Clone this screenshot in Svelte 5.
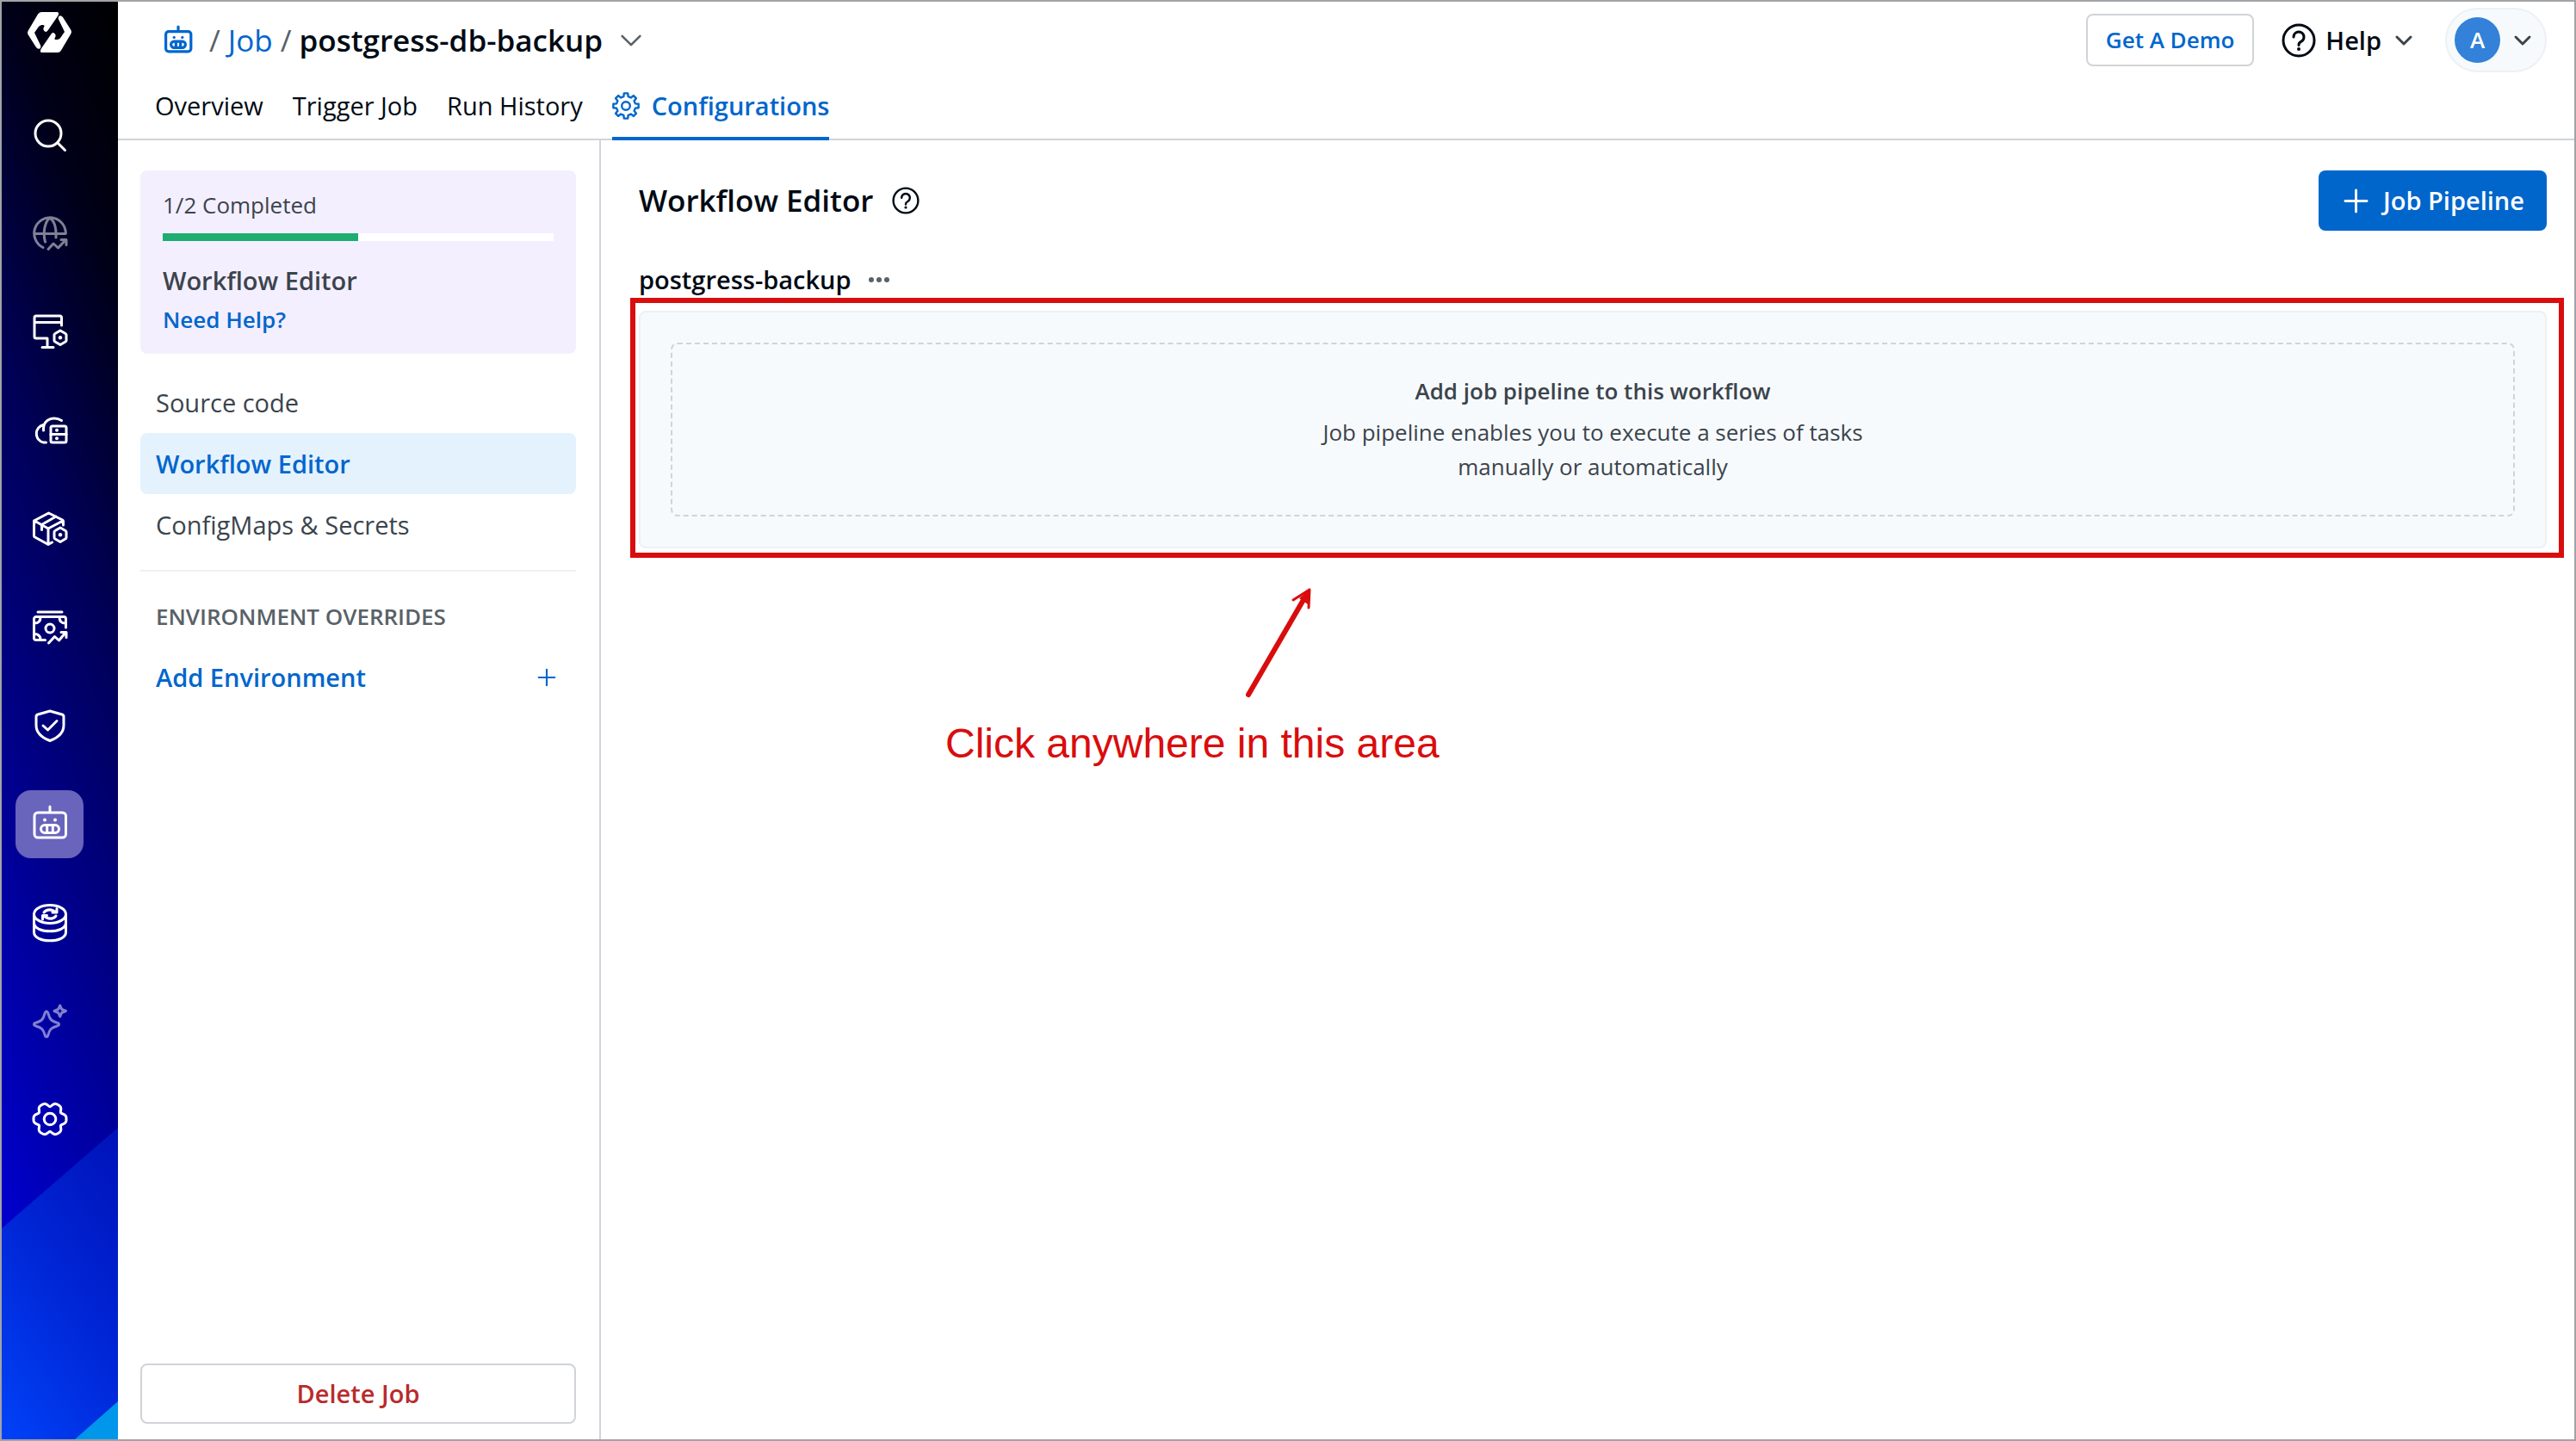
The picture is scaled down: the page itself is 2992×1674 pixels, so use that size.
<script lang="ts">
  let workflowName = "postgress-backup";
  let completed = 1;
  let total = 2;

  const railItems = [
    { id: "search", label: "Search" },
    { id: "globe", label: "Application insights", faded: true },
    { id: "monitor", label: "Application management" },
    { id: "cloud", label: "Infrastructure management" },
    { id: "box", label: "Software release management" },
    { id: "cost", label: "Cost visibility" },
    { id: "shield", label: "Security center" },
    { id: "robot", label: "Automation", active: true },
    { id: "database", label: "Backup management" },
    { id: "sparkle", label: "AI recommendations", faded: true },
    { id: "settings", label: "Global configuration" },
  ];

  const tabs = ["Overview", "Trigger Job", "Run History"];

  const configLinks = [
    { text: "Source code" },
    { text: "Workflow Editor", active: true },
    { text: "ConfigMaps & Secrets" },
  ];

  // closed outline with broad rounded lobes and narrow dips between them
  function wavy(lobes: number, base: number, swing: number) {
    const points = [];
    for (let i = 0; i < 180; i++) {
      const a = (i / 180) * Math.PI * 2;
      const r = base + swing * Math.cos(lobes * a) - 0.6 * Math.cos(2 * lobes * a);
      points.push(`${(20 + r * Math.cos(a)).toFixed(2)} ${(20 + r * Math.sin(a)).toFixed(2)}`);
    }
    return `M${points.join("L")}Z`;
  }

  // gear with straight-sided teeth
  function gear(teeth: number, outer: number, inner: number) {
    const points = [];
    const step = (Math.PI * 2) / teeth;
    for (let i = 0; i < teeth; i++) {
      const mid = i * step - Math.PI / 2;
      const corners = [
        [inner, -0.3],
        [outer, -0.19],
        [outer, 0.19],
        [inner, 0.3],
      ];
      for (const [r, k] of corners) {
        const a = mid + k * step;
        points.push(`${(20 + r * Math.cos(a)).toFixed(2)} ${(20 + r * Math.sin(a)).toFixed(2)}`);
      }
    }
    return `M${points.join("L")}Z`;
  }
</script>

{#snippet robot()}
  <path d="M20 0v6M6 7h28.500a4 4 0 0 1 4 4v21a4 4 0 0 1-4 4h-28.500a4 4 0 0 1-4-4v-21a4 4 0 0 1 4-4z" />
  <rect x="9.500" y="21.500" width="21" height="9" rx="4.500" />
  <path d="M16.700 22v8M23.300 22v8" />
  <circle class="dot" cx="14" cy="15.500" r="2" />
  <circle class="dot" cx="26" cy="15.500" r="2" />
{/snippet}

{#snippet hexNut()}
  <path d="M32 19l6 3.500q1 .5 1 1.500v6.500q0 1-1 1.500l-6 3.500-6-3.500q-1-.5-1-1.500v-6.500q0-1 1-1.500z" />
  <circle class="dot" cx="32" cy="27.300" r="2.200" />
{/snippet}

{#snippet chevron()}
  <svg class="chevron" viewBox="0 0 20 12" aria-hidden="true"><path d="M2 2l8 8 8-8" /></svg>
{/snippet}

{#snippet plus()}
  <svg class="plus" viewBox="0 0 28 28" aria-hidden="true"><path d="M14 1v26M1 14h26" /></svg>
{/snippet}

{#snippet question()}
  <svg class="question" viewBox="0 0 40 40" aria-hidden="true">
    <circle cx="20" cy="20" r="18" />
    <path d="M14 16a6 6 0 1 1 9 5.200q-3 1.500-3 3.800v.5" />
    <circle class="dot" cx="20" cy="30" r="2" />
  </svg>
{/snippet}

<div class="app">
  <aside class="rail">
    <a class="logo" href="#home" aria-label="Home">
      <svg viewBox="0 0 51 47" aria-hidden="true">
        <path id="logo-half" d="M16 0h19q2 1 .5 4l-12 17.500q-2 2.500-4 .5t-.5-4.500q2-3-2.500-2.500-3 .5-4 2.500L8 24l7 14.500q1 3-1 4t-4-1.500L.5 26q-1-2 0-4L12 2.500Q13.500 0 16 0z" />
        <use href="#logo-half" transform="rotate(180 25.500 23.500)" />
      </svg>
    </a>
    <nav>
      {#each railItems as item}
        <button class:active={item.active} class:faded={item.faded} aria-label={item.label}>
          <svg viewBox="0 0 40 40" aria-hidden="true">
            {#if item.id === "search"}
              <circle cx="18" cy="18" r="15" />
              <path d="M29 29l8.500 8.500" />
            {:else if item.id === "globe"}
              <path d="M12 36.500A18.300 18.300 0 1 1 38.300 20.500H2M20 2.200C14 6 11.500 20 14.500 30M20 2.200C26 6 27.500 15 27 25" />
              <path d="M18 38.500l6-6.500 5.500 5L38 28M33 27.500h6v6" />
            {:else if item.id === "monitor"}
              <path d="M33.500 13V4a2 2 0 0 0-2-2H4a2 2 0 0 0-2 2v22a2 2 0 0 0 2 2h13v10M2 9.500h31M11 38.500h13" />
              {@render hexNut()}
            {:else if item.id === "cloud"}
              <path d="M15.500 34h-3a10.500 10.500 0 0 1 0-20.500M12.500 20v-3c1-10 12-14 21-8.500" />
              <rect x="21" y="15" width="18" height="19" rx="2" />
              <path d="M21 24.500h18" />
              <circle class="dot" cx="28" cy="19.700" r="2" />
              <circle class="dot" cx="28" cy="29.300" r="2" />
            {:else if item.id === "box"}
              <path d="M35.500 16v-4.500a2 2 0 0 0-1-1.500L18.500 2 2.500 10.500a1 1 0 0 0-1 1v17a2 2 0 0 0 1 1.500L18 38.500l4.500-2.500M18 38.500v-18.500M2 11l16 9 17-9M27 6l-16.500 9.500v6" />
              {@render hexNut()}
            {:else if item.id === "cost"}
              <path d="M6 3h28M14.500 35.500H4a2.500 2.500 0 0 1-2.500-2.500V11A2.500 2.500 0 0 1 4 8.500h32a2.500 2.500 0 0 1 2.500 2.500v10M2 16q7 0 7-7M31 9q0 7 7 7M2 28.500q7 0 7 7" />
              <circle cx="20" cy="22" r="5" />
              <path d="M18.500 39l7-7.500 5 4.500L38 27M33 26.500h6v6" />
            {:else if item.id === "shield"}
              <path d="M20 3l14 4q2 .6 2 2.500v10q0 12-16 18Q4 31.500 4 19.500v-10Q4 7.600 6 7zM12 20l5.500 5L28 14.500" />
            {:else if item.id === "robot"}
              {@render robot()}
            {:else if item.id === "database"}
              <ellipse cx="20" cy="10" rx="18.500" ry="10.500" />
              <path d="M1.500 10v21c0 13 37 13 37 0V10M1.500 20c0 13 37 13 37 0" />
              <path d="M13 8q4-5 11-2l3 1.500M28 3.500v4.500h-5M27 12q-4 5-11 2l-3-1.500M11.500 16v-4.500h5" />
            {:else if item.id === "sparkle"}
              <path d="M16 9q1.300 0 2 2.500c2 7 3.500 8.500 10 10.500q2.500.7 2.500 2t-2.500 2c-6.500 2-8 3.500-10 10q-.7 2.500-2 2.500t-2-2.500c-2-6.500-3.500-8-10-10q-2.500-.7-2.500-2t2.500-2c6.500-2 8-3.500 10-10.500q.7-2.500 2-2.500z" />
              <path d="M31.700 2l2 4.500 4.800 2-4.800 2-2 4.500-2-4.500-4.700-2 4.700-2z" />
            {:else}
              <path d={wavy(6, 17.4, 2.2)} />
              <circle cx="20" cy="20" r="6.800" />
            {/if}
          </svg>
        </button>
      {/each}
    </nav>
  </aside>

  <div class="page">
    <header>
      <div class="title-row">
        <div class="breadcrumb">
          <a class="home" href="#jobs" aria-label="Jobs">
            <svg viewBox="0 0 40 40" aria-hidden="true">{@render robot()}</svg>
          </a>
          <span>/</span>
          <a href="#job">Job</a>
          <span>/</span>
          <h1>postgress-db-backup</h1>
          <button class="switch" aria-label="Switch job">{@render chevron()}</button>
        </div>
        <div class="account">
          <button class="demo">Get A Demo</button>
          <button class="help">{@render question()}Help{@render chevron()}</button>
          <button class="profile" aria-label="Profile"><span>A</span>{@render chevron()}</button>
        </div>
      </div>
      <nav class="tabs">
        {#each tabs as tab}
          <a href="#tab">{tab}</a>
        {/each}
        <a class="active" href="#configurations">
          <svg viewBox="0 0 40 40" aria-hidden="true">
            <path d={gear(8, 18.5, 14)} />
            <circle cx="20" cy="20" r="6" />
          </svg>
          Configurations
        </a>
      </nav>
    </header>

    <div class="body">
      <aside class="side">
        <section class="progress">
          <p>{completed}/{total} Completed</p>
          <div class="bar"><div style="width: {(completed / total) * 100}%"></div></div>
          <h3>Workflow Editor</h3>
          <a href="#help">Need Help?</a>
        </section>
        <nav class="links">
          {#each configLinks as link}
            <a class:active={link.active} href="#config">{link.text}</a>
          {/each}
        </nav>
        <h4>ENVIRONMENT OVERRIDES</h4>
        <button class="add-env">Add Environment{@render plus()}</button>
        <button class="delete">Delete Job</button>
      </aside>

      <main>
        <div class="heading">
          <h2>Workflow Editor</h2>
          <button class="info" aria-label="About workflows">{@render question()}</button>
          <button class="primary">{@render plus()}Job Pipeline</button>
        </div>
        <div class="workflow-name">
          <h3>{workflowName}</h3>
          <button aria-label="More options">
            <svg viewBox="0 0 24 6" aria-hidden="true">
              <circle cx="3" cy="3" r="3" />
              <circle cx="12" cy="3" r="3" />
              <circle cx="21" cy="3" r="3" />
            </svg>
          </button>
        </div>
        <div class="workflow">
          <button class="add-pipeline">
            <strong>Add job pipeline to this workflow</strong>
            <span>Job pipeline enables you to execute a series of tasks manually or automatically</span>
          </button>
          <div class="outline"></div>
          <div class="callout">
            <svg viewBox="0 0 80 132" aria-hidden="true">
              <path class="shaft" d="M4 126L69 14" />
              <path d="M75 4L56 16M75 4l-1 21" />
              <path class="tip" d="M75 4L63 14l10 7z" />
            </svg>
            <p>Click anywhere in this area</p>
          </div>
        </div>
      </main>
    </div>
  </div>
</div>

<style>
  :global(body) {
    margin: 0;
    background: #fff;
  }
  .app {
    display: flex;
    min-height: 100vh;
    box-sizing: border-box;
    border: 2px solid #a1a4a6;
    color: #000a14;
    font-family: "Open Sans", "Noto Sans", sans-serif;
    font-size: 29px;
    line-height: 40px;
  }
  h1,
  h2,
  h3,
  h4,
  p {
    margin: 0;
    font-size: inherit;
    font-weight: 600;
  }
  p {
    font-weight: 400;
  }
  a {
    color: inherit;
    text-decoration: none;
  }
  button {
    display: flex;
    align-items: center;
    box-sizing: border-box;
    margin: 0;
    padding: 0;
    border: 0;
    background: none;
    color: inherit;
    font: inherit;
    font-weight: 600;
    cursor: pointer;
  }
  svg {
    display: block;
    flex: none;
    overflow: visible;
    fill: none;
    stroke: currentColor;
    stroke-width: 3;
    stroke-linecap: round;
    stroke-linejoin: round;
  }
  .dot {
    fill: currentColor;
    stroke: none;
  }

  .rail {
    position: relative;
    flex: 0 0 135px;
    color: #fff;
    background: linear-gradient(249deg, #000 0%, #000018 17%, #000058 38%, #00008c 60%, #0000a0 68%, #0000c8 85%, #0000d0 100%);
  }
  .rail::before,
  .rail::after {
    content: "";
    position: absolute;
    right: 0;
    bottom: 0;
  }
  .rail::before {
    width: 100%;
    height: 362px;
    background: linear-gradient(235deg, #0012b8 0%, #0026d6 50%, #0042f8 100%);
    clip-path: polygon(100% 0, 100% 100%, 0 100%, 0 117px);
  }
  .rail::after {
    width: 50px;
    height: 44px;
    background: #0096ea;
    clip-path: polygon(100% 0, 100% 100%, 0 100%);
  }
  .logo {
    display: block;
    padding: 12px 0 0 30px;
  }
  .logo svg {
    width: 51px;
    height: 47px;
    fill: #fff;
    stroke: none;
  }
  .rail nav {
    position: relative;
    z-index: 1;
    display: flex;
    flex-direction: column;
    justify-content: space-between;
    height: 1223px;
    margin: 56px 0 0 16px;
  }
  .rail button {
    justify-content: center;
    width: 79px;
    height: 79px;
    border-radius: 18px;
  }
  .rail button.active {
    background: #6964bc;
  }
  .rail button.faded {
    color: rgba(255, 255, 255, 0.5);
  }
  .rail button svg {
    width: 40px;
    height: 40px;
  }

  .page {
    display: flex;
    flex: 1;
    flex-direction: column;
    min-width: 0;
  }
  header {
    border-bottom: 2px solid #d0d4d9;
  }
  .title-row {
    display: flex;
    align-items: center;
    justify-content: space-between;
    height: 89px;
    padding: 0 32px 0 54px;
  }
  .breadcrumb,
  .account {
    display: flex;
    align-items: center;
  }
  .breadcrumb {
    gap: 9px;
    color: #596168;
    font-size: 35px;
  }
  .breadcrumb a {
    color: #0066cc;
  }
  .breadcrumb h1 {
    color: #000a14;
  }
  .breadcrumb .home {
    margin-right: 11px;
  }
  .home svg {
    width: 32px;
    height: 32px;
    stroke-width: 4;
  }
  .switch {
    margin-left: 11px;
  }
  .switch svg {
    width: 26px;
    height: 16px;
    stroke-width: 2;
  }
  .account {
    gap: 32px;
  }
  .demo {
    justify-content: center;
    height: 61px;
    padding: 0 21px 2px;
    border: 2px solid #d0d4d9;
    border-radius: 8px;
    color: #0066cc;
    font-size: 26px;
  }
  .help {
    gap: 11px;
    margin-right: 6px;
  }
  .question {
    width: 40px;
    height: 40px;
  }
  .chevron {
    width: 20px;
    height: 12px;
  }
  .account .chevron {
    color: #3b444c;
  }
  .help .chevron {
    margin-left: 5px;
  }
  .profile {
    gap: 16px;
    height: 75px;
    padding: 0 16px 0 9px;
    border: 2px solid #edf1f5;
    border-radius: 38px;
    background: #f7fafc;
  }
  .profile span {
    width: 53px;
    border-radius: 50%;
    background: #3381d8;
    color: #fff;
    font-size: 26px;
    line-height: 53px;
  }
  .tabs {
    display: flex;
    gap: 34px;
    padding: 12px 0 0 43px;
  }
  .tabs a {
    display: flex;
    align-items: center;
    gap: 14px;
    margin-bottom: -2px;
    padding-bottom: 16px;
    border-bottom: 4px solid transparent;
  }
  .tabs .active {
    border-color: #0066cc;
    color: #0066cc;
    font-weight: 600;
  }
  .tabs svg {
    width: 32px;
    height: 32px;
  }

  .body {
    display: flex;
    flex: 1;
  }
  .side {
    display: flex;
    flex: 0 0 506px;
    flex-direction: column;
    padding: 35px 27px 18px 26px;
    border-right: 2px solid #d0d4d9;
    color: #3b444c;
  }
  .progress {
    padding: 20px 26px;
    border-radius: 8px;
    background: #f4efff;
  }
  .progress p {
    font-size: 26px;
  }
  .progress a {
    display: block;
    margin-top: 5px;
    color: #0066cc;
    font-size: 26px;
    font-weight: 600;
  }
  .bar {
    height: 9px;
    margin: 13px 0 26px;
    background: #fff;
  }
  .bar div {
    height: 100%;
    background: #1dad70;
  }
  .links {
    margin-top: 21px;
    padding-bottom: 17px;
    border-bottom: 2px solid #edf1f5;
  }
  .links a {
    display: block;
    padding: 0 18px;
    border-radius: 8px;
    line-height: 71px;
  }
  .links .active {
    background: #e4f2fd;
    color: #0066cc;
    font-weight: 600;
  }
  h4 {
    margin: 32px 18px 15px;
    color: #596168;
    font-size: 26px;
  }
  .add-env {
    justify-content: space-between;
    height: 71px;
    padding: 0 24px 0 18px;
    color: #0066cc;
  }
  .plus {
    width: 20px;
    height: 20px;
  }
  .delete {
    justify-content: center;
    height: 70px;
    margin-top: auto;
    border: 2px solid #d0d4d9;
    border-radius: 8px;
    color: #b92b2b;
  }

  main {
    flex: 1;
    min-width: 0;
    padding: 35px 32px 35px 44px;
  }
  .heading {
    display: flex;
    align-items: center;
    height: 70px;
  }
  h2 {
    font-size: 35px;
  }
  .info {
    margin-left: 22px;
  }
  .info svg {
    width: 32px;
    height: 32px;
  }
  .primary {
    gap: 18px;
    height: 70px;
    margin-left: auto;
    padding: 0 26px 0 30px;
    border-radius: 8px;
    background: #0066cc;
    color: #fff;
  }
  .primary .plus {
    width: 27px;
    height: 27px;
  }
  .workflow-name {
    display: flex;
    align-items: center;
    gap: 20px;
    margin: 37px 0 16px;
  }
  .workflow-name svg {
    width: 24px;
    height: 6px;
    fill: #596168;
    stroke: none;
  }
  .workflow {
    position: relative;
    padding: 35px;
    border: 2px solid #edf1f5;
    border-radius: 8px;
    background: #f7fafc;
  }
  .add-pipeline {
    flex-direction: column;
    gap: 8px;
    width: 100%;
    padding: 34px 0 36px;
    border: 2px dashed #d0d4d9;
    border-radius: 8px;
    color: #3b444c;
    font-size: 26px;
  }
  .add-pipeline strong {
    font-weight: 600;
  }
  .add-pipeline span {
    max-width: 660px;
    font-weight: 400;
  }

  /* markup drawn on top of the page */
  .outline {
    position: absolute;
    inset: -17px -22px -13px -12px;
    border: 6px solid #d90d0d;
    pointer-events: none;
  }
  .callout {
    position: absolute;
    top: 318px;
    left: 354px;
    color: #d90d0d;
    font-family: "Liberation Sans", Arial, sans-serif;
    font-size: 48px;
    line-height: 56px;
    white-space: nowrap;
  }
  .callout svg {
    width: 80px;
    height: 132px;
    margin: 0 0 23px 348px;
  }
  .callout .shaft {
    stroke-width: 6;
  }
  .callout .tip {
    fill: currentColor;
    stroke: none;
  }
</style>
